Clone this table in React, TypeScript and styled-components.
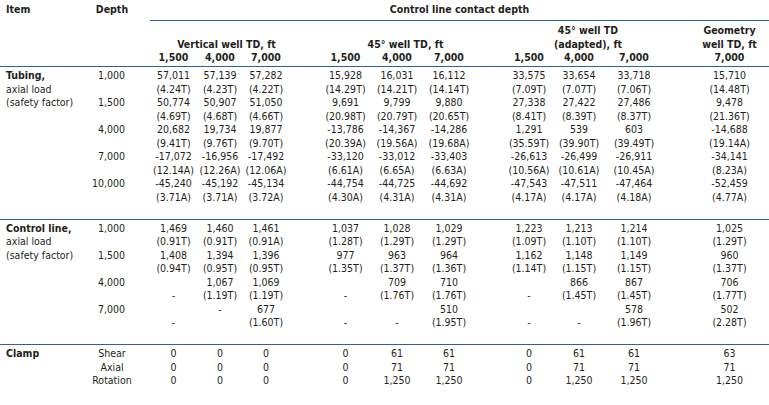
import React from "react";
import styled, { createGlobalStyle, css } from "styled-components";

const BLUE = "#2a62aa";
const INK = "#231f20";

const Global = createGlobalStyle`
  html, body { margin: 0; padding: 0; background: #ffffff; }
  body {
    font-family: "DejaVu Sans Condensed", "DejaVu Sans", "Liberation Sans", Arial, sans-serif;
    font-stretch: condensed;
    font-size: 10.5px;
    line-height: 13.5px;
    color: ${INK};
  }
`;

const tracks = css`
  display: grid;
  grid-template-columns: 82px 60px 8px 47px 46px 46px 31px 51px 52px 52px 29px 50px 50px 60px 26px 79px;
`;

const COLS = [4, 5, 6, 8, 9, 10, 12, 13, 14, 16];

const Page = styled.div`
  width: 769px;
  height: 405px;
  overflow: hidden;
`;

const Header = styled.header`
  ${tracks}
  grid-template-rows: 21px auto auto;
  border-bottom: 1.5px solid ${BLUE};
  padding-bottom: 1.5px;
  font-weight: 700;
`;

const TopLabel = styled.div<{ $col: number; $left?: boolean }>`
  grid-column: ${(p) => p.$col};
  grid-row: 1;
  padding: 3px 0 0 ${(p) => (p.$left ? "6px" : "0")};
  text-align: ${(p) => (p.$left ? "left" : "center")};
`;

const Title = styled.div`
  grid-column: 4 / -1;
  grid-row: 1;
  padding-top: 3px;
  text-align: center;
  border-bottom: 1.5px solid ${BLUE};
`;

const GroupHead = styled.div<{ $col: number; $span: number; $shift: number }>`
  grid-column: ${(p) => p.$col} / span ${(p) => p.$span};
  grid-row: 2;
  align-self: end;
  padding: 3px 0 0 ${(p) => p.$shift}px;
  text-align: center;
  white-space: nowrap;
`;

const ColHead = styled.div<{ $col: number }>`
  grid-column: ${(p) => p.$col};
  grid-row: 3;
  text-align: center;
`;

const Section = styled.section<{ $last?: boolean }>`
  ${tracks}
  grid-auto-rows: 13.5px;
  padding: 2px 0 ${(p) => (p.$last ? "2px" : "14.5px")};
  border-bottom: ${(p) => (p.$last ? "none" : `1.5px solid ${BLUE}`)};
`;

const ItemLabel = styled.div`
  grid-column: 1;
  grid-row: 1 / span 3;
  padding-left: 6px;
  white-space: nowrap;
`;

const ItemLine = styled.div<{ $bold?: boolean }>`
  font-weight: ${(p) => (p.$bold ? 700 : 400)};
`;

const DepthCell = styled.div<{ $row: number; $centered?: boolean }>`
  grid-column: 2;
  grid-row: ${(p) => p.$row};
  text-align: ${(p) => (p.$centered ? "center" : "right")};
  padding-right: ${(p) => (p.$centered ? "0" : "17px")};
  white-space: nowrap;
`;

const ValueCell = styled.div<{ $col: number; $row: number; $span: number }>`
  grid-column: ${(p) => p.$col};
  grid-row: ${(p) => p.$row} / span ${(p) => p.$span};
  display: grid;
  grid-auto-rows: 13.5px;
  text-align: center;
  white-space: nowrap;
`;

type Pair = [string, string];

type Rec = { depth: string; values: Pair[] };

const tubing: Rec[] = [
  {
    depth: "1,000",
    values: [
      ["57,011", "(4.24T)"], ["57,139", "(4.23T)"], ["57,282", "(4.22T)"],
      ["15,928", "(14.29T)"], ["16,031", "(14.21T)"], ["16,112", "(14.14T)"],
      ["33,575", "(7.09T)"], ["33,654", "(7.07T)"], ["33,718", "(7.06T)"],
      ["15,710", "(14.48T)"],
    ],
  },
  {
    depth: "1,500",
    values: [
      ["50,774", "(4.69T)"], ["50,907", "(4.68T)"], ["51,050", "(4.66T)"],
      ["9,691", "(20.98T)"], ["9,799", "(20.79T)"], ["9,880", "(20.65T)"],
      ["27,338", "(8.41T)"], ["27,422", "(8.39T)"], ["27,486", "(8.37T)"],
      ["9,478", "(21.36T)"],
    ],
  },
  {
    depth: "4,000",
    values: [
      ["20,682", "(9.41T)"], ["19,734", "(9.76T)"], ["19,877", "(9.70T)"],
      ["-13,786", "(20.39A)"], ["-14,367", "(19.56A)"], ["-14,286", "(19.68A)"],
      ["1,291", "(35.59T)"], ["539", "(39.90T)"], ["603", "(39.49T)"],
      ["-14,688", "(19.14A)"],
    ],
  },
  {
    depth: "7,000",
    values: [
      ["-17,072", "(12.14A)"], ["-16,956", "(12.26A)"], ["-17,492", "(12.06A)"],
      ["-33,120", "(6.61A)"], ["-33,012", "(6.65A)"], ["-33,403", "(6.63A)"],
      ["-26,613", "(10.56A)"], ["-26,499", "(10.61A)"], ["-26,911", "(10.45A)"],
      ["-34,141", "(8.23A)"],
    ],
  },
  {
    depth: "10,000",
    values: [
      ["-45,240", "(3.71A)"], ["-45,192", "(3.71A)"], ["-45,134", "(3.72A)"],
      ["-44,754", "(4.30A)"], ["-44,725", "(4.31A)"], ["-44,692", "(4.31A)"],
      ["-47,543", "(4.17A)"], ["-47,511", "(4.17A)"], ["-47,464", "(4.18A)"],
      ["-52,459", "(4.77A)"],
    ],
  },
];

const controlLine: Rec[] = [
  {
    depth: "1,000",
    values: [
      ["1,469", "(0.91T)"], ["1,460", "(0.91T)"], ["1,461", "(0.91A)"],
      ["1,037", "(1.28T)"], ["1,028", "(1.29T)"], ["1,029", "(1.29T)"],
      ["1,223", "(1.09T)"], ["1,213", "(1.10T)"], ["1,214", "(1.10T)"],
      ["1,025", "(1.29T)"],
    ],
  },
  {
    depth: "1,500",
    values: [
      ["1,408", "(0.94T)"], ["1,394", "(0.95T)"], ["1,396", "(0.95T)"],
      ["977", "(1.35T)"], ["963", "(1.37T)"], ["964", "(1.36T)"],
      ["1,162", "(1.14T)"], ["1,148", "(1.15T)"], ["1,149", "(1.15T)"],
      ["960", "(1.37T)"],
    ],
  },
  {
    depth: "4,000",
    values: [
      ["", "-"], ["1,067", "(1.19T)"], ["1,069", "(1.19T)"],
      ["", "-"], ["709", "(1.76T)"], ["710", "(1.76T)"],
      ["", "-"], ["866", "(1.45T)"], ["867", "(1.45T)"],
      ["706", "(1.77T)"],
    ],
  },
  {
    depth: "7,000",
    values: [
      ["", "-"], ["-", ""], ["677", "(1.60T)"],
      ["", "-"], ["", "-"], ["510", "(1.95T)"],
      ["", "-"], ["", "-"], ["578", "(1.96T)"],
      ["502", "(2.28T)"],
    ],
  },
];

const clamp: { label: string; values: string[] }[] = [
  { label: "Shear", values: ["0", "0", "0", "0", "61", "61", "0", "61", "61", "63"] },
  { label: "Axial", values: ["0", "0", "0", "0", "71", "71", "0", "71", "71", "71"] },
  { label: "Rotation", values: ["0", "0", "0", "0", "1,250", "1,250", "0", "1,250", "1,250", "1,250"] },
];

const colHeads = ["1,500", "4,000", "7,000", "1,500", "4,000", "7,000", "1,500", "4,000", "7,000", "7,000"];

function PairSection({ title, records }: { title: [string, string, string]; records: Rec[] }) {
  return (
    <Section>
      <ItemLabel>
        <ItemLine $bold>{title[0]}</ItemLine>
        <ItemLine>{title[1]}</ItemLine>
        <ItemLine>{title[2]}</ItemLine>
      </ItemLabel>
      {records.map((rec, r) => (
        <React.Fragment key={rec.depth}>
          <DepthCell $row={r * 2 + 1}>{rec.depth}</DepthCell>
          {rec.values.map((v, i) => (
            <ValueCell key={i} $col={COLS[i]} $row={r * 2 + 1} $span={2}>
              <span>{v[0]}</span>
              <span>{v[1]}</span>
            </ValueCell>
          ))}
        </React.Fragment>
      ))}
    </Section>
  );
}

export default function App() {
  return (
    <Page>
      <Global />
      <Header>
        <TopLabel $col={1} $left>Item</TopLabel>
        <TopLabel $col={2}>Depth</TopLabel>
        <Title>Control line contact depth</Title>
        <GroupHead $col={4} $span={3} $shift={14}>Vertical well TD, ft</GroupHead>
        <GroupHead $col={8} $span={3} $shift={16}>45° well TD, ft</GroupHead>
        <GroupHead $col={12} $span={3} $shift={8}>
          45° well TD
          <br />
          (adapted), ft
        </GroupHead>
        <GroupHead $col={16} $span={1} $shift={0}>
          Geometry
          <br />
          well TD, ft
        </GroupHead>
        {colHeads.map((h, i) => (
          <ColHead key={i} $col={COLS[i]}>{h}</ColHead>
        ))}
      </Header>
      <PairSection title={["Tubing,", "axial load", "(safety factor)"]} records={tubing} />
      <PairSection title={["Control line,", "axial load", "(safety factor)"]} records={controlLine} />
      <Section $last>
        <ItemLabel>
          <ItemLine $bold>Clamp</ItemLine>
        </ItemLabel>
        {clamp.map((row, r) => (
          <React.Fragment key={row.label}>
            <DepthCell $row={r + 1} $centered>{row.label}</DepthCell>
            {row.values.map((v, i) => (
              <ValueCell key={i} $col={COLS[i]} $row={r + 1} $span={1}>
                <span>{v}</span>
              </ValueCell>
            ))}
          </React.Fragment>
        ))}
      </Section>
    </Page>
  );
}
